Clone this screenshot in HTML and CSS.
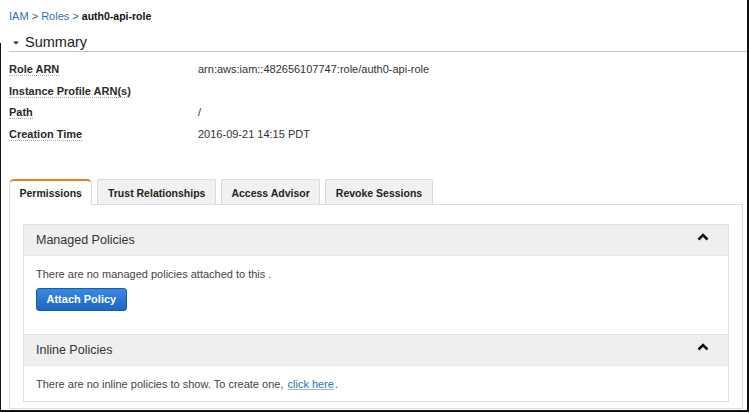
FILE: index.html
```html
<!DOCTYPE html>
<html lang="en">
<head>
<meta charset="utf-8">
<title>auth0-api-role</title>
<link rel="stylesheet" href="styles.css">
</head>
<body>
<div class="frame">
  <nav class="crumbs">
    <a href="#" class="crumb-link">IAM</a> <span class="sep">&gt;</span> <a href="#" class="crumb-link">Roles</a> <span class="sep">&gt;</span> <span class="crumb-current">auth0-api-role</span>
  </nav>

  <h2 class="summary-title">
    <svg class="caret" width="6" height="4" viewBox="0 0 6 4"><polygon points="0,0.5 6,0.5 3,3.5" fill="#333"/></svg>
    <span>Summary</span>
  </h2>

  <div class="summary">
    <div class="row"><span class="label"><span class="term">Role ARN</span></span><span class="value">arn:aws:iam::482656107747:role/auth0-api-role</span></div>
    <div class="row"><span class="label"><span class="term">Instance Profile ARN(s)</span></span><span class="value"></span></div>
    <div class="row"><span class="label"><span class="term">Path</span></span><span class="value">/</span></div>
    <div class="row"><span class="label"><span class="term">Creation Time</span></span><span class="value">2016-09-21 14:15 PDT</span></div>
  </div>

  <div class="tabs">
    <div class="tab active">Permissions</div>
    <div class="tab">Trust Relationships</div>
    <div class="tab">Access Advisor</div>
    <div class="tab">Revoke Sessions</div>
  </div>

  <div class="tabpanel">
    <div class="accordion">
      <div class="acc-head">
        <span>Managed Policies</span>
        <svg class="chev" width="12" height="8" viewBox="0 0 12 8"><polyline points="1.5,6.5 6,2 10.5,6.5" fill="none" stroke="#111" stroke-width="2.6"/></svg>
      </div>
      <div class="acc-body managed">
        <p class="msg">There are no managed policies attached to this .</p>
        <button class="btn-primary">Attach Policy</button>
      </div>
      <div class="acc-head">
        <span>Inline Policies</span>
        <svg class="chev" width="12" height="8" viewBox="0 0 12 8"><polyline points="1.5,6.5 6,2 10.5,6.5" fill="none" stroke="#111" stroke-width="2.6"/></svg>
      </div>
      <div class="acc-body inline">
        <p class="msg">There are no inline policies to show. To create one, <a href="#" class="link">click here</a>.</p>
      </div>
    </div>
  </div>
</div>
</body>
</html>
```

FILE: styles.css
```css
* { box-sizing: border-box; }

html, body {
  margin: 0;
  padding: 0;
  background: #fff;
}

body {
  font-family: "Liberation Sans", Arial, Helvetica, sans-serif;
  color: #333;
}

.frame {
  position: relative;
  width: 749px;
  height: 412px;
  border-right: 2px solid #111;
  border-bottom: 2px solid #111;
  padding-left: 9px;
  overflow: hidden;
}

.frame::before {
  content: "";
  position: absolute;
  left: 0;
  top: 43px;
  bottom: 0;
  width: 1px;
  background: #111;
}

.crumbs {
  padding-top: 9px;
  font-size: 11px;
  line-height: 14px;
  height: 23px;
}

.crumb-link {
  color: #2f6db5;
  text-decoration: none;
}

.sep {
  color: #555;
}

.crumb-current {
  color: #111;
  font-weight: bold;
  font-size: 10.5px;
}

.summary-title {
  margin: 10px 0 0 0;
  height: 19px;
  display: flex;
  align-items: center;
  gap: 6px;
  padding-left: 4px;
  font-size: 14.5px;
  font-weight: normal;
  line-height: 18px;
  color: #222;
  border-bottom: 1px solid #c8c8c8;
}

.caret {
  display: block;
  margin-top: 1px;
}

.summary {
  margin-top: 7px;
}

.row {
  display: flex;
  font-size: 11px;
  line-height: 21.67px;
  height: 21.67px;
}

.label {
  width: 189px;
  flex: none;
  font-weight: bold;
  color: #2a2a2a;
}

.term {
  border-bottom: 1px dotted #aaa;
}

.value {
  color: #333;
}

.tabs {
  margin-top: 33px;
  margin-left: 0;
  display: flex;
  gap: 5px;
  position: relative;
  z-index: 1;
}

.tab {
  height: 25px;
  padding: 5px 9.5px 0 9.5px;
  font-size: 10.5px;
  font-weight: bold;
  line-height: 16px;
  color: #222;
  background: #f1f1f1;
  border: 1px solid #d9d9d9;
  border-bottom: none;
  border-radius: 2px 2px 0 0;
  margin-bottom: -1px;
}

.tab.active {
  background: #fff;
  border-top: 2px solid #e8801f;
  border-radius: 5px 5px 0 0;
  height: 26px;
  padding-top: 4px;
}

.tabpanel {
  margin-right: 4px;
  border: 1px solid #dcdcdc;
  padding: 19px 13px 6px 13px;
}

.accordion {
  border: 1px solid #e2e2e2;
}

.acc-head {
  display: flex;
  align-items: center;
  justify-content: space-between;
  height: 31px;
  padding: 0 19px 0 12px;
  background: #efefef;
  font-size: 12.5px;
  color: #333;
  border-bottom: 1px solid #e6e6e6;
}

.acc-head .chev {
  display: block;
  margin-top: -5px;
}

.acc-body {
  padding: 10px 12px 9px 12px;
  background: #fff;
}

.acc-body.managed {
  padding-bottom: 23px;
  border-bottom: 1px solid #e2e2e2;
}

.msg {
  margin: 0;
  font-size: 11px;
  line-height: 16px;
  color: #444;
}

.link {
  color: #2f6db5;
  text-decoration: underline;
  text-decoration-color: #9fb9dc;
  margin-left: 1px;
  margin-right: 1px;
}

.btn-primary {
  display: block;
  margin-top: 6px;
  height: 23px;
  padding: 0 9.5px;
  font-family: "Liberation Sans", Arial, sans-serif;
  font-size: 11px;
  font-weight: bold;
  color: #fff;
  background: linear-gradient(#3a8ae0, #1d67c2);
  border: 1px solid #1a5cab;
  border-radius: 3px;
}
```
